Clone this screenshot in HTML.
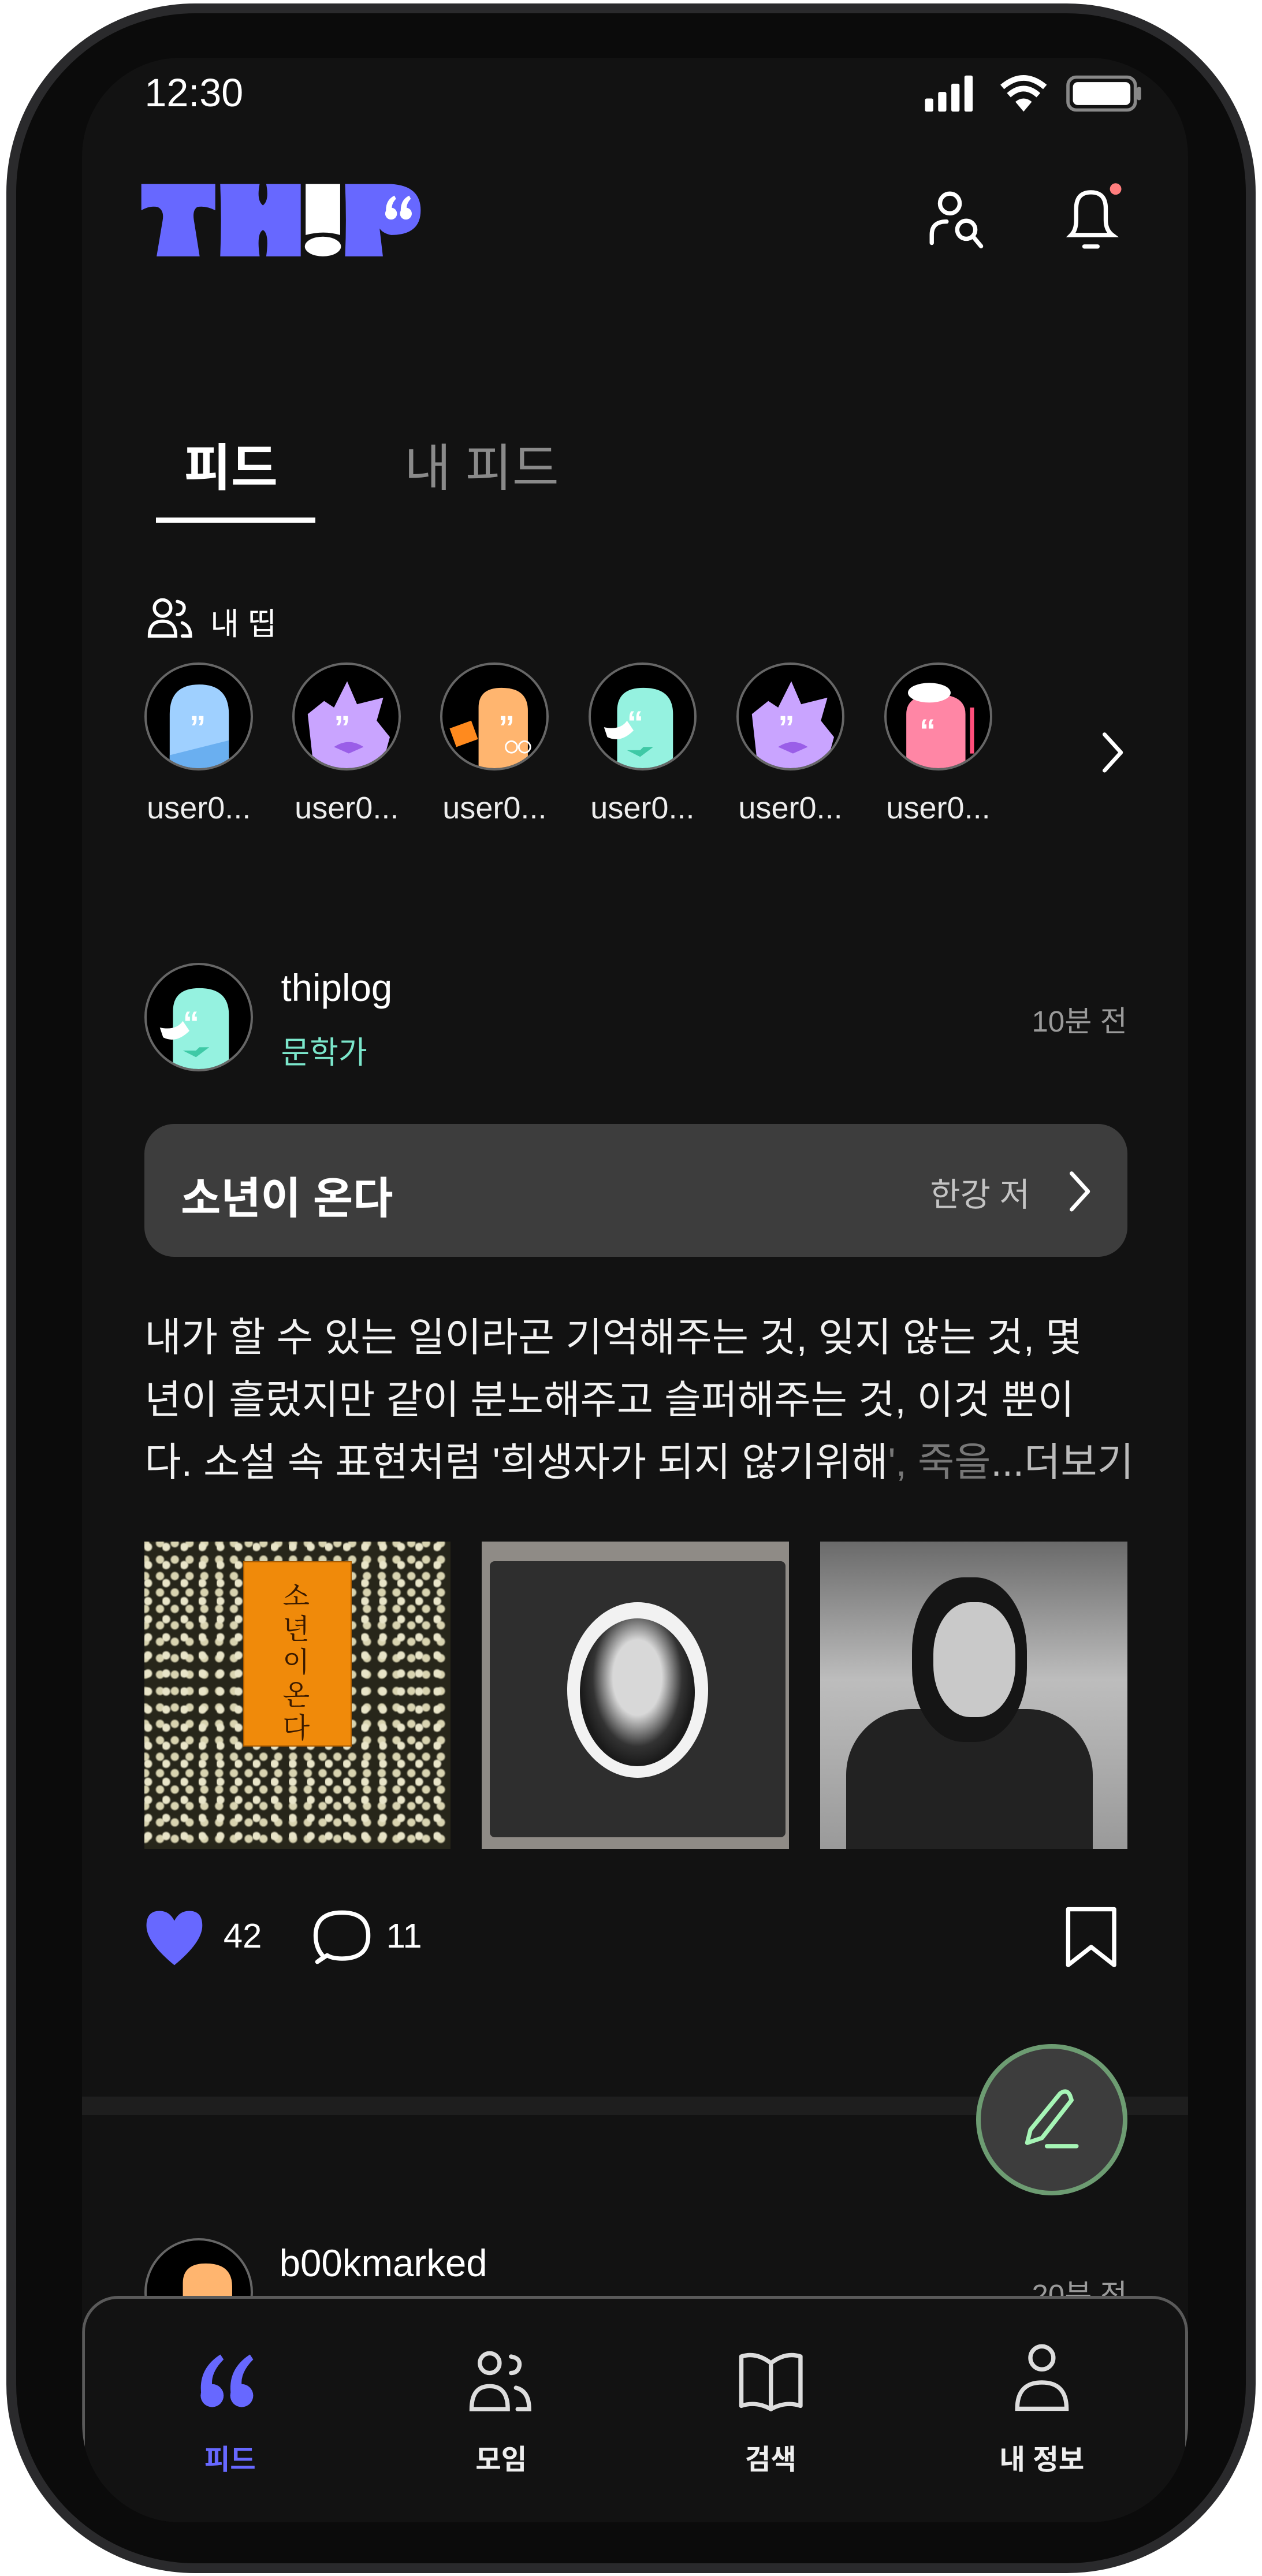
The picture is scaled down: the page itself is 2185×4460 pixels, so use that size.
<!DOCTYPE html>
<html><head><meta charset="utf-8">
<style>
*{margin:0;padding:0;box-sizing:border-box}
html,body{width:2185px;height:4460px;background:#fff;overflow:hidden}
#z{zoom:2.8451;width:768px;height:1568px;position:relative;font-family:"Liberation Sans","Noto Sans CJK KR",sans-serif;color:#fff}
.a{position:absolute}
.dev{left:4px;top:2px;width:760px;height:1564px;border-radius:115px;background:#0b0b0b;border:6px solid #2a2a2c}
.scr{left:50px;top:35px;width:673px;height:1500px;border-radius:60px;background:#121212;overflow:hidden}
.av{width:66px;height:66px;border-radius:50%;background:#000;border:1.5px solid #666;overflow:hidden}
.ul{font-size:19px;color:#eee;width:80px;text-align:center}
.nl{font-size:17px;font-weight:bold;width:100px;text-align:center;color:#eee}
</style></head><body><div id="z">
<div class="a dev"></div>
<div class="a scr"></div>
<!-- status -->
<div class="a" style="left:88px;top:43px;font-size:24px">12:30</div>
<svg class="a" style="left:560px;top:44px" width="136" height="28" viewBox="0 0 136 28">
<rect x="3" y="16" width="5" height="8" rx="1" fill="#fff"/><rect x="11" y="12" width="5" height="12" rx="1" fill="#fff"/><rect x="19" y="7" width="5" height="17" rx="1" fill="#fff"/><rect x="27" y="2" width="5" height="22" rx="1" fill="#fff"/>
<path d="M50 9 Q63 -2 76 9" stroke="#fff" stroke-width="3.5" fill="none"/><path d="M54 14 Q63 6 72 14" stroke="#fff" stroke-width="3.5" fill="none"/><path d="M58 18 L63 24 L68 18 Q63 14 58 18Z" fill="#fff"/>
<rect x="90" y="3" width="41" height="20" rx="5" fill="none" stroke="#888" stroke-width="2"/><rect x="93" y="6" width="35" height="14" rx="3" fill="#fff"/><rect x="132" y="9" width="2.5" height="8" rx="1" fill="#888"/>
</svg>
<!-- logo -->
<svg class="a" style="left:0;top:0" width="768" height="200" viewBox="0 0 768 200">
<path d="M86 112H131V128Q125 125 120 126Q117 128 118 134L121.5 156H95.3L99 134Q100 128 96 126Q91 125 86 128Z" fill="#6768ff"/>
<path d="M134 112H158Q156 122 160 125Q164 122 162 112H183V156H162Q164 142 160 140Q156 142 158 156H134Q135 134 134 112Z" fill="#6768ff"/>
<path d="M186 112H207V143Q197 140 186 143Z" fill="#fff"/><ellipse cx="196.5" cy="150" rx="11" ry="6" fill="#fff"/>
<path d="M210 112H238Q256 113 256 128Q256 143 238 143Q233 142 231 139L233 156H210Q211 134 210 112Z" fill="#6768ff"/>
<g fill="#fff"><circle cx="238" cy="130" r="3.6"/><path d="M235 130Q234 122 240 119L241 121Q238 124 238.5 128Z"/><circle cx="247" cy="130" r="3.6"/><path d="M244 130Q243 122 249 119L250 121Q247 124 247.5 128Z"/></g>
</svg>
<!-- header icons -->
<svg class="a" style="left:562px;top:113px" width="42" height="42" viewBox="0 0 42 42" fill="none" stroke="#fff" stroke-width="2.6" stroke-linecap="round">
<circle cx="16" cy="11" r="6"/><path d="M5 35V30Q5 22 14 22"/><circle cx="26" cy="27" r="5.5"/><path d="M30 31L35 37"/></svg>
<svg class="a" style="left:644px;top:110px" width="44" height="48" viewBox="0 0 44 48" fill="none" stroke="#fff" stroke-width="2.6" stroke-linecap="round">
<path d="M8 33Q11 30 11 24V17Q11 7 20 7Q29 7 29 17V24Q29 30 33 33Z"/><path d="M16 40H24"/><circle cx="35" cy="5" r="3.5" fill="#ff7d7d" stroke="none"/></svg>
<!-- tabs -->
<div class="a" style="left:112px;top:260px;font-size:31px;font-weight:bold">피드</div>
<div class="a" style="left:246px;top:260px;font-size:31px;color:#8a8a8a">내 피드</div>
<div class="a" style="left:95px;top:315px;width:97px;height:3px;background:#fff"></div>
<!-- 내 띱 -->
<svg class="a" style="left:89px;top:362px" width="32" height="28" viewBox="0 0 32 28" fill="none" stroke="#fff" stroke-width="2" stroke-linecap="round"><circle cx="10" cy="8" r="5"/><path d="M2 25Q2 16 10 16Q18 16 18 25Z"/><path d="M19 4Q24 5 23 9Q22 12 19 12"/><path d="M22 17Q27 19 27 25H22"/></svg>
<div class="a" style="left:128px;top:364px;font-size:19px">내 띱</div>
<!-- avatars -->
<div class="a av" style="left:88px;top:403px;background:#000"><svg width="66" height="66" viewBox="0 0 66 66"><path d="M14 66V30Q14 12 32 12Q50 12 50 30V66Z" fill="#9fd0ff"/><path d="M14 55L50 46V66H14Z" fill="#6aaff0"/><text x="26" y="45" font-size="20" fill="#fff" font-weight="bold">”</text></svg></div>
<div class="a av" style="left:178px;top:403px"><svg width="66" height="66" viewBox="0 0 66 66"><path d="M12 66L8 30L18 22L24 26L32 10L38 24L54 20L50 34L58 44L52 66Z" fill="#c9a4ff"/><path d="M24 50Q33 44 42 50L33 54Z" fill="#9a5ee8"/><text x="24" y="45" font-size="20" fill="#fff" font-weight="bold">”</text></svg></div>
<div class="a av" style="left:268px;top:403px"><svg width="66" height="66" viewBox="0 0 66 66"><path d="M22 66V26Q22 14 36 14Q52 14 52 28V66Z" fill="#ffb56f"/><rect x="6" y="36" width="14" height="12" fill="#ff8a1e" transform="rotate(-20 13 42)"/><text x="34" y="45" font-size="20" fill="#fff" font-weight="bold">”</text><circle cx="42" cy="50" r="3.5" fill="none" stroke="#fff"/><circle cx="50" cy="50" r="3.5" fill="none" stroke="#fff"/></svg></div>
<div class="a av" style="left:358px;top:403px"><svg width="66" height="66" viewBox="0 0 66 66"><path d="M16 66V28Q16 14 32 14Q50 14 50 30V66Z" fill="#95f2e0"/><path d="M8 38Q18 40 22 34L26 40Q18 48 10 44Z" fill="#fff"/><path d="M22 52L30 56L38 50L32 50L30 52Z" fill="#3fc9a6"/><text x="22" y="42" font-size="20" fill="#fff" font-weight="bold">“</text></svg></div>
<div class="a av" style="left:448px;top:403px"><svg width="66" height="66" viewBox="0 0 66 66"><path d="M12 66L8 30L18 22L24 26L32 10L38 24L54 20L50 34L58 44L52 66Z" fill="#c9a4ff"/><path d="M24 50Q33 44 42 50L33 54Z" fill="#9a5ee8"/><text x="24" y="45" font-size="20" fill="#fff" font-weight="bold">”</text></svg></div>
<div class="a av" style="left:538px;top:403px"><svg width="66" height="66" viewBox="0 0 66 66"><path d="M12 66V30Q12 18 30 18Q48 18 48 30V66Z" fill="#ff86a5"/><ellipse cx="26" cy="17" rx="13" ry="6" fill="#fff"/><path d="M52 26V54" stroke="#ff4f7b" stroke-width="2.5"/><text x="20" y="47" font-size="20" fill="#fff" font-weight="bold">“</text></svg></div>
<div class="a ul" style="left:81px;top:481px">user0...</div>
<div class="a ul" style="left:171px;top:481px">user0...</div>
<div class="a ul" style="left:261px;top:481px">user0...</div>
<div class="a ul" style="left:351px;top:481px">user0...</div>
<div class="a ul" style="left:441px;top:481px">user0...</div>
<div class="a ul" style="left:531px;top:481px">user0...</div>
<svg class="a" style="left:668px;top:444px" width="20" height="28" viewBox="0 0 20 28" fill="none" stroke="#fff" stroke-width="2.4" stroke-linecap="round" stroke-linejoin="round"><path d="M4 3L14 14L4 25"/></svg>
<!-- post 1 -->
<div class="a av" style="left:88px;top:586px"><svg width="66" height="66" viewBox="0 0 66 66"><path d="M16 66V28Q16 14 32 14Q50 14 50 30V66Z" fill="#95f2e0"/><path d="M8 38Q18 40 22 34L26 40Q18 48 10 44Z" fill="#fff"/><path d="M22 52L30 56L38 50L32 50L30 52Z" fill="#3fc9a6"/><text x="22" y="42" font-size="20" fill="#fff" font-weight="bold">“</text></svg></div>
<div class="a" style="left:171px;top:588px;font-size:23px">thiplog</div>
<div class="a" style="left:171px;top:625px;font-size:19px;color:#7be6cb">문학가</div>
<div class="a" style="left:560px;top:607px;width:126px;text-align:right;font-size:18px;color:#9a9a9a">10분 전</div>
<div class="a" style="left:88px;top:684px;width:598px;height:81px;border-radius:18px;background:#3d3d3d"></div>
<div class="a" style="left:110px;top:708px;font-size:26.5px;font-weight:bold">소년이 온다</div>
<div class="a" style="left:566px;top:711px;font-size:20px;color:#c4c4c4">한강 저</div>
<svg class="a" style="left:648px;top:711px" width="20" height="28" viewBox="0 0 20 28" fill="none" stroke="#fff" stroke-width="2.4" stroke-linecap="round" stroke-linejoin="round"><path d="M4 3L14 14L4 25"/></svg>
<div class="a" style="left:88px;top:795px;width:620px;font-size:24.2px;line-height:38px;color:#f2f2f2;white-space:nowrap">내가 할 수 있는 일이라곤 기억해주는 것, 잊지 않는 것, 몇<br>년이 흘렀지만 같이 분노해주고 슬퍼해주는 것, 이것 뿐이<br>다. 소설 속 표현처럼 '희생자가 되지 않기위해<span style="color:#777">', 죽을</span><span style="color:#bbb">...더보기</span></div>
<!-- images -->
<div class="a" style="left:88px;top:938px;width:186px;height:187px;background:radial-gradient(circle at 20% 30%,#e8e4c8 0 2px,transparent 3px) 0 0/11px 11px,radial-gradient(circle,#d8d3b0 0 2px,transparent 3px) 5px 6px/9px 10px,#27261a"></div>
<div class="a" style="left:148px;top:950px;width:66px;height:113px;background:#f08a0a;border:1px solid #a85a00"></div>
<div class="a" style="left:172px;top:960px;width:20px;font-size:17px;line-height:20px;color:#3a1a00;font-family:'Noto Serif CJK SC',serif">소<br>년<br>이<br>온<br>다</div>
<div class="a" style="left:293px;top:938px;width:187px;height:187px;background:#8f8b86"></div>
<div class="a" style="left:298px;top:950px;width:180px;height:168px;background:#2e2e2e;border-radius:3px"></div>
<div class="a" style="left:345px;top:975px;width:86px;height:107px;border-radius:50%;background:#f2f2f2"></div>
<div class="a" style="left:353px;top:985px;width:70px;height:90px;border-radius:50%;background:radial-gradient(ellipse at 50% 40%,#d8d8d8 0 30%,#333 55%,#1a1a1a 70%)"></div>
<div class="a" style="left:499px;top:938px;width:187px;height:187px;background:linear-gradient(#6a6a6a,#bdbdbd 45%,#9a9a9a)"></div>
<div class="a" style="left:515px;top:1040px;width:150px;height:85px;border-radius:40px 40px 0 0;background:#222"></div>
<div class="a" style="left:555px;top:960px;width:70px;height:100px;border-radius:45%;background:#151515"></div>
<div class="a" style="left:568px;top:975px;width:50px;height:70px;border-radius:45%;background:#c9c9c9"></div>
<!-- actions -->
<svg class="a" style="left:86px;top:1160px" width="40" height="38" viewBox="0 0 40 38"><path d="M20 36Q3 22 3 12Q3 3 11 3Q17 3 20 9Q23 3 29 3Q37 3 37 12Q37 22 20 36Z" fill="#6768ff"/></svg>
<div class="a" style="left:136px;top:1166px;font-size:21px">42</div>
<svg class="a" style="left:189px;top:1160px" width="38" height="38" viewBox="0 0 38 38" fill="none" stroke="#fff" stroke-width="2.6" stroke-linejoin="round"><path d="M8 31Q3 26 3 18Q3 4 19 4Q35 4 35 18Q35 32 19 32Q13 32 10 30L4 34Z"/></svg>
<div class="a" style="left:235px;top:1166px;font-size:21px">11</div>
<svg class="a" style="left:646px;top:1159px" width="36" height="40" viewBox="0 0 36 40" fill="none" stroke="#fff" stroke-width="2.6" stroke-linejoin="round"><path d="M4 3H32V37L18 26L4 37Z"/></svg>
<div class="a" style="left:50px;top:1276px;width:673px;height:11px;background:#1e1e1e"></div>
<!-- post 2 -->
<div class="a av" style="left:88px;top:1362px"><svg width="66" height="66" viewBox="0 0 66 66"><path d="M22 66V26Q22 14 36 14Q52 14 52 28V66Z" fill="#ffb56f"/></svg></div>
<div class="a" style="left:170px;top:1364px;font-size:23px">b00kmarked</div>
<div class="a" style="left:560px;top:1382px;width:126px;text-align:right;font-size:18px;color:#9a9a9a">20분 전</div>
<!-- FAB -->
<div class="a" style="left:594px;top:1244px;width:92px;height:92px;border-radius:50%;background:#3d3d3d;border:3px solid #6d9c72"></div>
<svg class="a" style="left:615px;top:1266px" width="50" height="50" viewBox="0 0 50 50" fill="none" stroke="#a6f5b6" stroke-width="2.6" stroke-linecap="round" stroke-linejoin="round"><path d="M10 38L12 30L30 8Q34 5 36 9L37 12L19 35Z"/><path d="M22 40H40"/></svg>
<!-- nav -->
<div class="a" style="left:50px;top:1397px;width:673px;height:138px;background:#121212;border:2px solid #5a5a5a;border-bottom:none;border-radius:22px 22px 0 0;clip-path:inset(0 0 0 0 round 22px 22px 60px 60px)"></div>
<svg class="a" style="left:118px;top:1430px" width="42" height="40" viewBox="0 0 42 40" fill="#6768ff"><circle cx="11" cy="28" r="7"/><path d="M4.5 28Q2 12 16 3L18 6Q10 14 11 22Z"/><circle cx="29" cy="28" r="7"/><path d="M22.5 28Q20 12 34 3L36 6Q28 14 29 22Z"/></svg>
<svg class="a" style="left:284px;top:1428px" width="44" height="42" viewBox="0 0 44 42" fill="none" stroke="#ddd" stroke-width="2.6" stroke-linecap="round"><circle cx="14" cy="10" r="6"/><path d="M3 38Q3 24 14 24Q25 24 25 38Z"/><path d="M27 6Q33 7 32 12Q31 16 27 16"/><path d="M30 25Q38 27 38 38H31"/></svg>
<svg class="a" style="left:448px;top:1428px" width="42" height="42" viewBox="0 0 42 42" fill="none" stroke="#ddd" stroke-width="2.6" stroke-linejoin="round"><path d="M21 10Q12 3 3 6V36Q12 33 21 38Q30 33 39 36V6Q30 3 21 10Z"/><path d="M21 10V38"/></svg>
<svg class="a" style="left:614px;top:1424px" width="40" height="46" viewBox="0 0 40 46" fill="none" stroke="#ddd" stroke-width="2.6"><circle cx="20" cy="11" r="7"/><path d="M5 42Q5 26 20 26Q35 26 35 42Z"/></svg>
<div class="a nl" style="left:90px;top:1483px;color:#6768ff">피드</div>
<div class="a nl" style="left:255px;top:1483px">모임</div>
<div class="a nl" style="left:419px;top:1483px">검색</div>
<div class="a nl" style="left:584px;top:1483px">내 정보</div>
</div></body></html>
